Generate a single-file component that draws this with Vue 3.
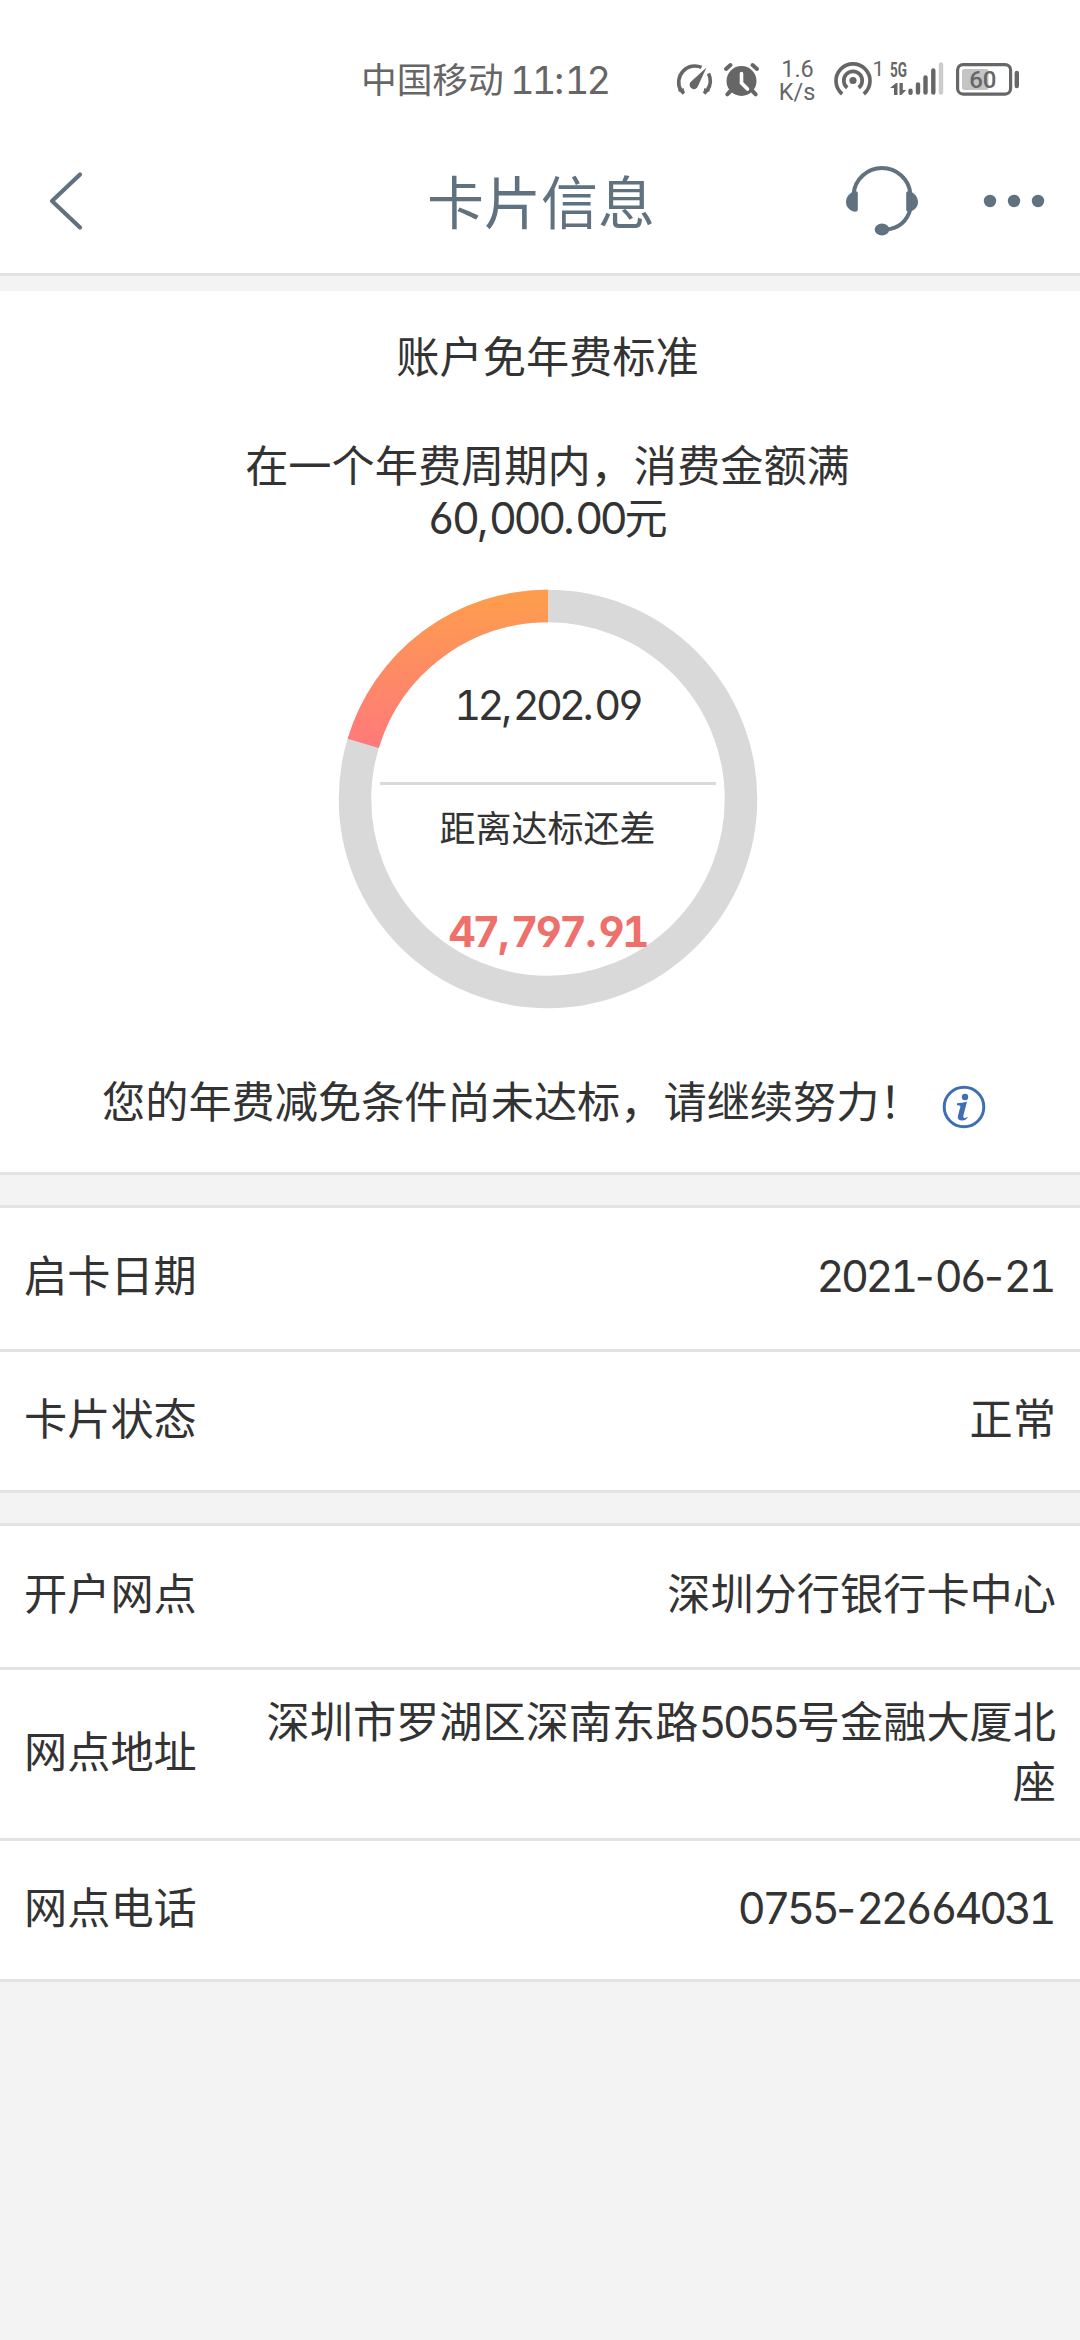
<script setup>
import { h } from 'vue'

const cardRows = [
  { label: '启卡日期', value: '2021-06-21', numeric: true },
  { label: '卡片状态', value: '正常' },
]

const spent = 12202.09
const target = 60000
const radius = 193
const circumference = 2 * Math.PI * radius
const filled = (spent / target) * circumference

// Digits are set tabular, separators keep their natural width.
const Figures = ({ text }) =>
  h('span', { class: 'num' }, text.split(/([^0-9]+)/).map((part) =>
    /^[^0-9]/.test(part) ? h('span', { class: 'mark' }, part) : part))
Figures.props = ['text']
</script>

<template>
  <div class="screen">
    <div class="status">
      <span class="carrier">中国移动</span>
      <Figures class="clock" text="11:12" />
      <svg class="status-icons" width="360" height="60" viewBox="670 50 360 60">
        <g fill="none" stroke="#666" stroke-width="3.600">
          <path d="M684 93.500l-3.400-3.600A16.300 16.300 0 0 1 701.500 67.300M708.500 73.500A16.300 16.300 0 0 1 707.400 89.900L704 93.500" />
          <path d="M678.500 90.500l5.500-1M709.500 90.500l-5.500-1" stroke-width="2.500" />
        </g>
        <path d="M706.500 67.500l-8.500 18.500a4.300 4.300 0 1 1-6.600-4.700z" fill="#666" />
        <circle cx="741.500" cy="81" r="15" fill="#666" />
        <g fill="none" stroke="#666" stroke-width="4" stroke-linecap="round">
          <path d="M726 69l4.500-4M757 69l-4.500-4M730.500 91l-3.200 3.300M752.500 91l3.200 3.300" />
        </g>
        <path d="M741.500 73.500v9.500l6 6" fill="none" stroke="#fff" stroke-width="3.600" stroke-linecap="round" />
        <text x="797.500" y="77" class="tiny" text-anchor="middle">1.6</text>
        <text x="797" y="99.500" class="tiny" text-anchor="middle">K/s</text>
        <g fill="none" stroke="#666" stroke-width="3.700">
          <path d="M842.200 94A17 17 0 1 1 863.800 94" />
          <path d="M847.300 87.800A9.200 9.200 0 1 1 858.700 87.800" />
        </g>
        <circle cx="853" cy="80.500" r="3.600" fill="#666" />
        <text x="872.500" y="76" class="sup">1</text>
        <text x="890" y="77" class="net" textLength="17" lengthAdjust="spacingAndGlyphs">5G</text>
        <path d="M894 95V88h-4l6-5h1.500v12zM899.500 83h3.300v7h3.500l-5 5h-1.800z" fill="#666" />
        <g stroke="#666" stroke-width="4.400" stroke-linecap="round">
          <path d="M910.500 90.700v2M918 84.500v8M925.500 77.500v15M933.300 70.500v22" />
          <path d="M941 64.500v28" stroke="#ccc" />
        </g>
        <rect x="957.600" y="64.600" width="53" height="29.500" rx="5.500" fill="none" stroke="#666" stroke-width="3.200" />
        <rect x="962" y="69" width="26.500" height="21" rx="2.500" fill="#c4c4c4" />
        <path d="M1016.800 73v13" stroke="#666" stroke-width="4.400" stroke-linecap="round" />
        <text x="982.800" y="88" class="charge" text-anchor="middle">60</text>
      </svg>
    </div>

    <header class="nav">
      <svg class="back" width="40" height="64" viewBox="0 0 40 64">
        <path d="M33 5.500L5 32l28 26.500" fill="none" stroke="#60727f" stroke-width="4.200" stroke-linecap="round" stroke-linejoin="round" />
      </svg>
      <h1>卡片信息</h1>
      <svg class="service" width="72" height="72" viewBox="0 0 72 72">
        <path d="M7.600 28A28.500 28.300 0 0 1 64.400 28M64.500 43Q59 62 40 63.500" fill="none" stroke="#60727f" stroke-width="4" />
        <path d="M11.800 27v16.500c0 1.500-1 2.200-3 2.200C3.500 44.500 0 41 0 36s3.500-9.500 9-10.800c1.900 0 2.800.6 2.800 1.800zM60.200 27v16.500c0 1.500 1 2.200 3 2.200 5.300-1.200 8.800-4.700 8.800-9.700s-3.500-9.500-9-10.800c-1.900 0-2.800.6-2.800 1.800z" fill="#60727f" />
        <ellipse cx="36" cy="63.600" rx="7.300" ry="6" fill="#60727f" />
      </svg>
      <svg class="more" width="62" height="14" viewBox="0 0 62 14">
        <g fill="#60727f">
          <circle cx="7" cy="7" r="6.200" />
          <circle cx="31" cy="7" r="6.200" />
          <circle cx="55" cy="7" r="6.200" />
        </g>
      </svg>
    </header>

    <section class="fee">
      <h2>账户免年费标准</h2>
      <p class="rule">在一个年费周期内，消费金额满<br /><Figures text="60,000.00" />元</p>
      <div class="ring">
        <svg width="420" height="420" viewBox="0 0 420 420">
          <defs>
            <linearGradient id="arc" gradientUnits="userSpaceOnUse" x1="410" y1="0" x2="265" y2="0">
              <stop offset="0" stop-color="#fd9c4e" />
              <stop offset="1" stop-color="#ff7a7a" />
            </linearGradient>
          </defs>
          <circle cx="210" cy="210" :r="radius" fill="none" stroke="#d9d9d9" stroke-width="32.500" />
          <circle
            cx="210" cy="210" :r="radius" fill="none" stroke="url(#arc)" stroke-width="32.500"
            :stroke-dasharray="`${filled} ${circumference}`" transform="matrix(0 -1 -1 0 420 420)"
          />
        </svg>
        <div class="ring-text">
          <Figures class="spent" text="12,202.09" />
          <span class="divider"></span>
          <span class="caption">距离达标还差</span>
          <Figures class="gap" text="47,797.91" />
        </div>
      </div>
      <div class="notice">
        <span>您的年费减免条件尚未达标，请继续努力！</span>
        <svg width="44" height="44" viewBox="0 0 44 44">
          <circle cx="22" cy="22" r="19.800" fill="none" stroke="#3f6eb5" stroke-width="3" />
          <circle cx="23" cy="12" r="3.200" fill="#3f6eb5" />
          <path d="M15 18.200q5-.2 10-1.400l-3.600 13.700q-.7 2.700 1.300 2.500t3.500-1.200q-2 3.600-6 3.600-5.400 0-4.200-5l2.300-8.500q.6-2-3.300-1.700z" fill="#3f6eb5" />
        </svg>
      </div>
    </section>

    <section class="group">
      <div v-for="(row, i) in cardRows" :key="row.label" class="row" :class="{ tall: i === 0 }">
        <span class="label">{{ row.label }}</span>
        <span class="value" :class="{ figures: row.numeric }"><Figures v-if="row.numeric" :text="row.value" /><template v-else>{{ row.value }}</template></span>
      </div>
    </section>

    <section class="group">
      <div class="row tall">
        <span class="label">开户网点</span>
        <span class="value">深圳分行银行卡中心</span>
      </div>
      <div class="row address">
        <span class="label">网点地址</span>
        <span class="value">深圳市罗湖区深南东路<Figures text="5055" />号金融大厦北座</span>
      </div>
      <div class="row">
        <span class="label">网点电话</span>
        <span class="value figures"><Figures text="0755-22664031" /></span>
      </div>
    </section>
  </div>
</template>

<style>
body {
  margin: 0;
  background: #f3f3f3;
}

.num {
  font-feature-settings: "tnum", "cv03", "cv04";
  letter-spacing: -3.400px;
}

.num .mark {
  font-feature-settings: normal;
  letter-spacing: 0;
}
</style>

<style scoped>
.screen {
  width: 1080px;
  height: 2340px;
  overflow: hidden;
  background: #f3f3f3;
  color: #333;
  font-family: Inter, "Noto Sans CJK SC", sans-serif;
  font-size: 43.200px;
}

.status {
  box-sizing: border-box;
  display: flex;
  align-items: center;
  height: 128px;
  padding: 50px 50px 18px 361px;
  background: #fff;
  color: #666;
  line-height: 44px;
  white-space: nowrap;
}

.carrier {
  width: 149px;
  font-size: 35.700px;
}

.clock {
  width: 160px;
  font-size: 38px;
  letter-spacing: -2.800px;
}

.status-icons {
  flex: none;
}

.tiny,
.sup,
.net,
.charge {
  fill: #666;
  font-family: Roboto, sans-serif;
  font-size: 24px;
}

.tiny {
  font-size: 23.500px;
}

.sup {
  font-size: 21px;
}

.net {
  font-size: 20px;
  font-weight: 700;
}

.charge {
  font-weight: 500;
}

.nav {
  box-sizing: border-box;
  display: flex;
  align-items: center;
  height: 148px;
  padding: 0 35px 0 47px;
  border-bottom: 3px solid #e3e3e3;
  background: #fff;
  color: #60727f;
}

h1 {
  width: 230px;
  margin: 7px 0 0 340px;
  font-size: 57px;
  font-weight: 400;
  line-height: 80px;
  white-space: nowrap;
}

.service {
  margin: 2px 0 0 189px;
}

.more {
  margin-left: auto;
}

.fee {
  box-sizing: border-box;
  display: flex;
  flex-direction: column;
  align-items: center;
  height: 884px;
  margin-top: 15px;
  padding: 36px 0 0 15px;
  border-bottom: 3px solid #e3e3e3;
  background: #fff;
}

h2 {
  margin: 0;
  font-size: 43.200px;
  font-weight: 400;
  line-height: 60px;
}

.rule {
  margin: 53px 0 0;
  line-height: 52px;
  text-align: center;
}

.ring {
  display: grid;
  width: 420px;
  height: 420px;
  margin-top: 45px;
}

.ring > * {
  grid-area: 1 / 1;
}

.ring-text {
  display: flex;
  flex-direction: column;
  align-items: center;
}

.spent {
  margin-top: 86px;
  font-size: 41.500px;
  line-height: 60px;
  letter-spacing: -3.700px;
}

.divider {
  width: 336px;
  height: 3px;
  margin-top: 47px;
  background: #d9d9d9;
}

.caption {
  margin-top: 19px;
  font-size: 36px;
  line-height: 50px;
}

.gap {
  margin-top: 48px;
  color: #ee706b;
  font-size: 42px;
  font-weight: 700;
  line-height: 60px;
  letter-spacing: -2.900px;
}

.notice {
  display: flex;
  align-items: center;
  align-self: flex-start;
  margin: 63px 0 0 87px;
  line-height: 60px;
  white-space: nowrap;
}

.notice svg {
  margin: 10px 0 0 19px;
}

.group {
  margin-top: 30px;
  border-top: 3px solid #e3e3e3;
  background: #fff;
}

.row {
  box-sizing: border-box;
  display: flex;
  align-items: center;
  justify-content: space-between;
  height: 141px;
  padding: 0 24px 5px;
  border-bottom: 3px solid #e3e3e3;
}

.row.tall {
  height: 144px;
}

.row.address {
  height: 171px;
}

.label {
  flex: none;
  line-height: 60px;
}

.value {
  width: 800px;
  line-height: 60px;
  text-align: right;
}

.figures {
  padding-right: 3px;
}
</style>
